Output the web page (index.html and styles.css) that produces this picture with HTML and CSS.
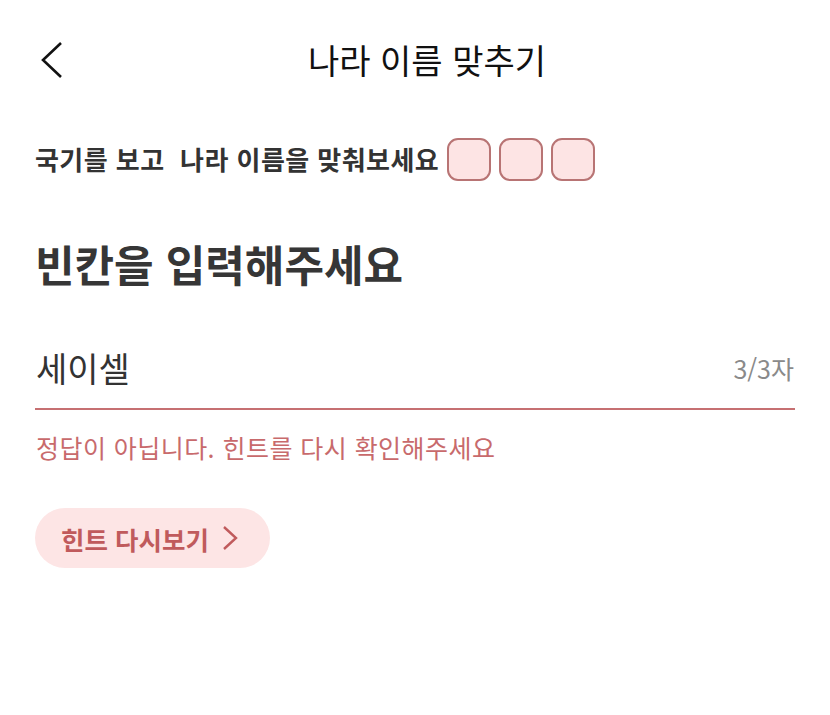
FILE: index.html
```html
<!DOCTYPE html>
<html lang="ko">
<head>
<meta charset="utf-8">
<link rel="stylesheet" href="styles.css">
</head>
<body>
<div class="page">
  <header class="topbar">
    <button class="back" aria-label="뒤로">
      <svg width="24" height="40" viewBox="0 0 24 40"><path d="M21 3 L3 20 L21 37" fill="none" stroke="#111" stroke-width="2.6" stroke-linejoin="miter"/></svg>
    </button>
    <h1 class="title">나라 이름 맞추기</h1>
  </header>

  <div class="quiz-line">
    <span class="quiz-text">국기를 보고&nbsp; 나라 이름을 맞춰보세요</span>
    <span class="slots">
      <span class="slot"></span><span class="slot"></span><span class="slot"></span>
    </span>
  </div>

  <h2 class="heading">빈칸을 입력해주세요</h2>

  <div class="field">
    <span class="value">세이셀</span>
    <span class="count">3/3자</span>
  </div>

  <p class="error">정답이 아닙니다. 힌트를 다시 확인해주세요</p>

  <button class="hint-btn">
    <span>힌트 다시보기</span>
    <svg width="16" height="26" viewBox="0 0 16 26"><path d="M2 2 L14 13 L2 24" fill="none" stroke="#c05a5c" stroke-width="2.4"/></svg>
  </button>
</div>
</body>
</html>
```

FILE: styles.css
```css
* { box-sizing: border-box; }
html, body {
  margin: 0;
  padding: 0;
  background: #fff;
}
body {
  font-family: "Noto Sans CJK KR", "Noto Sans", sans-serif;
  color: #333;
}
.page {
  width: 830px;
  height: 715px;
  padding: 0 35px;
}
.topbar {
  position: relative;
  height: 122px;
  display: flex;
  justify-content: center;
}
.back {
  position: absolute;
  left: 5px;
  top: 40px;
  padding: 0;
  border: 0;
  background: none;
  display: flex;
}
.title {
  margin: 0 0 0 24px;
  padding-top: 43px;
  font-size: 34px;
  font-weight: 400;
  color: #111;
  line-height: 1;
}
.quiz-line {
  display: flex;
  align-items: center;
  gap: 8px;
  height: 44px;
  margin-top: 15px;
}
.quiz-text {
  font-size: 26px;
  font-weight: 700;
  color: #333;
  letter-spacing: 0.45px;
  line-height: 1;
}
.slots {
  display: flex;
  gap: 8px;
}
.slot {
  width: 44px;
  height: 43px;
  border: 2px solid #b87474;
  border-radius: 11px;
  background: #fde4e4;
}
.heading {
  margin: 61px 0 0 0;
  font-size: 43px;
  font-weight: 700;
  color: #363636;
  line-height: 1;
  height: 46px;
}
.field {
  margin-top: 62px;
  display: flex;
  justify-content: space-between;
  align-items: center;
  height: 60px;
  padding: 0 1px 22px 1px;
  border-bottom: 2px solid #c67072;
}
.value {
  font-size: 34px;
  color: #333;
  line-height: 1;
}
.count {
  font-size: 25px;
  color: #8a8a8a;
  line-height: 1;
}
.error {
  margin: 22px 0 0 1px;
  font-size: 25px;
  color: #c86a6c;
  line-height: 30px;
  height: 30px;
  letter-spacing: 0.45px;
}
.hint-btn {
  margin-top: 46px;
  height: 60px;
  width: 235px;
  border: 0;
  border-radius: 30px;
  background: #fde5e5;
  display: flex;
  align-items: center;
  gap: 13px;
  padding: 0 0 0 26px;
  font-family: "Noto Sans CJK KR", "Noto Sans", sans-serif;
  font-size: 25.5px;
  font-weight: 700;
  color: #c05a5c;
}
```
